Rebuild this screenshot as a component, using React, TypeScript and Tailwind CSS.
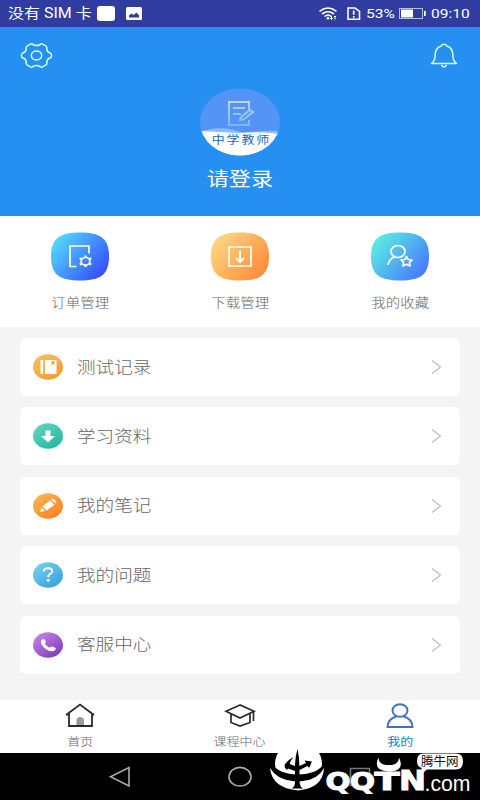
import React from "react";

const FONT = "font-['Roboto','Noto_Sans_CJK_SC',sans-serif]";

const Wide: React.FC<{ className?: string; children: React.ReactNode }> = ({ className = "", children }) => (
  <span className={`inline-block scale-x-[1.15] whitespace-nowrap ${className}`}>{children}</span>
);

const StatusBar = () => (
  <div className="h-[27px] bg-[#303c9f] flex items-center text-white text-[13.5px] leading-none">
    <Wide className="origin-left ml-[8px] w-[89px] text-[13.9px]">没有 SIM 卡</Wide>
    <svg className="w-[46px] h-[27px] shrink-0" viewBox="97 0 46 27">
      <rect x="97" y="6" width="18" height="15" rx="3" fill="#fff" />
      <rect x="126" y="7" width="16" height="13" rx="1.5" fill="#fff" />
      <path d="M129 17.5v-2l2.5-2 2 1.5 3-2.5 2.5 3v2z" fill="#303c9f" />
    </svg>
    <svg className="w-[42px] h-[27px] ml-auto shrink-0" viewBox="319 0 42 27" fill="none" stroke="#fff">
      <path d="M319.5 11.3q8.5-6.5 17 0M322 14q6-4.6 12 0M324.5 16.5q3.5-2.8 7 0" strokeWidth="1.6" />
      <circle cx="328" cy="18.2" r="1.3" fill="#fff" stroke="none" />
      <path d="M331.5 16v3.5m-1.3-1.3 1.3 1.3 1.2-1.3M335 19.5V16m-1.2 1.2L335 16l1.2 1.2" strokeWidth="1" />
      <path d="M348 8h7l4.5 3.3v8H348z" strokeWidth="1.6" />
      <path d="M353.7 10.5v4.2m0 1.3v1.7" strokeWidth="1.7" />
    </svg>
    <Wide className="origin-left ml-[5px] w-[33px]">53%</Wide>
    <svg className="w-[28px] h-[27px] shrink-0" viewBox="399 0 28 27">
      <rect x="399.5" y="8.5" width="23" height="10" fill="none" stroke="#b8bce4" />
      <rect x="401" y="9.5" width="12" height="8" fill="#fff" />
      <rect x="424" y="11" width="1.7" height="5" fill="#fff" />
    </svg>
    <Wide className="origin-left ml-[4px] w-[49px]">09:10</Wide>
  </div>
);

const Header = () => (
  <div className="h-[189px] bg-[#2590f1] grid grid-cols-3 px-[20px] pt-[14px]">
    <svg className="w-[33px] h-[30px]" viewBox="0 0 33 30" fill="none" stroke="#d5ffff" strokeWidth="1.5" strokeLinejoin="round">
      <path d="M10 3.3q1.6-1.2 3 .2 3.5 2.2 7 0 1.4-1.4 3-.2l3 1.9q1.3 1 .8 2.6.1 3.5 3.2 4.200 1.600.5 1.600 2.500t-1.600 2.500q-3.100.7-3.200 4.200.5 1.600-.8 2.600l-3 1.900q-1.600 1.200-3-.2-3.500-2.200-7 0-1.400 1.400-3 .2L7 23.800q-1.300-1-.8-2.600-.1-3.500-3.200-4.200-1.600-.5-1.600-2.500T3 12q3.100-.7 3.200-4.200-.5-1.600.8-2.600z" />
      <ellipse cx="16.5" cy="14.5" rx="5.2" ry="4.4" />
    </svg>
    <div className="flex flex-col items-center pt-[46.500px]">
      <svg className="w-[80px] h-[68px]" viewBox="0 0 80 68">
        <defs>
          <clipPath id="avatar"><ellipse cx="40" cy="34" rx="40" ry="33.500" /></clipPath>
          <linearGradient id="note" x2="0" y2="1">
            <stop stopColor="#b9d7ff" />
            <stop offset="1" stopColor="#7fb5f8" />
          </linearGradient>
        </defs>
        <g clipPath="url(#avatar)">
          <path d="M0 0h80v68H0z" fill="#5494f7" />
          <path d="M0 44q22-8 43 1 20-3 37-2v25H0z" fill="#8bbaff" />
          <path d="M0 43q20 1 37 2 25-2 43 1v22H0z" fill="#fff" />
        </g>
        <g fill="none" stroke="url(#note)" strokeWidth="2">
          <path d="M49 22V14H29v23h20v-5M33 20h12M33 26h8M40 32l1-3 9-7 3 2-9 7z" />
        </g>
        <text x="10.200" y="56" fontSize="11.300" textLength="50" transform="scale(1.150 1)" fill="#2864bb">中学教师</text>
      </svg>
      <Wide className="mt-[10px] text-[19.300px] leading-[28px] text-white">请登录</Wide>
    </div>
    <svg className="w-[33px] h-[30px] justify-self-end -mr-[1px]" viewBox="0 0 33 30" fill="none" stroke="#d5ffff" strokeWidth="1.500" strokeLinejoin="round">
      <path d="M3.500 22.500q3.700-3 3.600-8 .1-8 6.200-9.500.5-1.700 2.700-1.700T18.700 5q6.100 1.500 6.200 9.500-.1 5 3.600 8zM13.500 24q2.500 4 5 0" />
    </svg>
  </div>
);

const tiles = [
  {
    label: "订单管理",
    id: "order",
    stops: ["#53e1ff", "#3545fa"],
    icon: (
      <>
        <path d="M25.5 34.500H19V14h19v7.500" />
        <ellipse cx="34.500" cy="29.300" rx="4.300" ry="3.800" />
        <path d="M34.500 25.500v-2m0 11.600v-2M30.800 27.300l-2-1.200m11.400 6.400-2-1.200M30.800 31.300l-2 1.200m11.400-6.400-2 1.200" strokeWidth="2.200" />
      </>
    ),
  },
  {
    label: "下载管理",
    id: "download",
    stops: ["#ffdb86", "#ff8733"],
    icon: (
      <>
        <path d="M18 15h22v19H18z" />
        <path d="M29 19v10.500m-4-3.500 4 4 4-4" strokeWidth="2" />
      </>
    ),
  },
  {
    label: "我的收藏",
    id: "favorite",
    stops: ["#5cf4e1", "#4672ff"],
    icon: (
      <>
        <ellipse cx="27" cy="19.500" rx="7" ry="6" />
        <path d="M17 33q.5-5 6.500-8.500" />
        <path d="m35.500 24.500 1.600 3 4 .5-2.700 2.400.7 3.600-3.600-1.700-3.600 1.700.7-3.600L30 28l4-.5z" strokeLinejoin="round" />
      </>
    ),
  },
];

const Tiles = () => (
  <div className="h-[111px] bg-white grid grid-cols-3 pt-[16px]">
    {tiles.map((t) => (
      <div key={t.id} className="flex flex-col items-center">
        <svg className="w-[58px] h-[49px]" viewBox="0 0 58 49">
          <defs>
            <linearGradient id={t.id} x1="0" y1="0.150" x2="1" y2="0.850">
              <stop stopColor={t.stops[0]} />
              <stop offset="1" stopColor={t.stops[1]} />
            </linearGradient>
          </defs>
          <path d="M29 .5C49 .5 58 6 58 24.500S49 48.500 29 48.500 0 43 0 24.500 9 .5 29 .5z" fill={`url(#${t.id})`} />
          <g fill="none" stroke="#fff" strokeWidth="1.700">{t.icon}</g>
        </svg>
        <Wide className="mt-[12px] text-[12.600px] leading-[20px] font-light text-[#666]">{t.label}</Wide>
      </div>
    ))}
  </div>
);

const rows = [
  {
    label: "测试记录",
    id: "record",
    stops: ["#f8c063", "#f29a30"],
    icon: (
      <>
        <path d="M7.500 6h2.700v14H7.500zM12 6h11.500v14H12z" fill="#fff" />
        <path d="M18.500 7h2.800v4l-1.400-1.100-1.400 1.100z" fill="#f2a040" />
      </>
    ),
  },
  {
    label: "学习资料",
    id: "study",
    stops: ["#63d5bf", "#20b69f"],
    icon: <path d="M12.500 7.500h5v5.500H22l-7 6.500L8 13h4.500z" fill="#fff" />,
  },
  {
    label: "我的笔记",
    id: "notes",
    stops: ["#ffb852", "#fa7d22"],
    icon: (
      <path d="m7 19 1.500-4.300 3.400 3.200zM9.500 13.500l7.500-6 4.400 4.200-7.900 5.800zM18 6.700q2.200-1.300 4 .3 1.500 1.700.5 3.500z" fill="#fff" />
    ),
  },
  {
    label: "我的问题",
    id: "question",
    stops: ["#77d0f3", "#369fdb"],
    icon: (
      <>
        <path d="M10.700 9.500q.3-3.300 4.500-3.300 4 0 4 3 0 1.900-2.200 3-1.800.9-1.800 3" fill="none" stroke="#fff" strokeWidth="2" />
        <ellipse cx="15.200" cy="18.300" rx="1.600" ry="1.400" fill="#fff" />
      </>
    ),
  },
  {
    label: "客服中心",
    id: "service",
    stops: ["#c78ae9", "#7c35b9"],
    icon: (
      <path d="M8 8.500q1.500-2 3-1.500l2 2.500q.2 1-1.300 2 1.800 3 5 4.200 1.700-1.500 2.700-1.200l3.300 1.500q.7.900-1 2.500-3.700 2-8.700-1.200Q7.500 13.500 8 8.500z" fill="#fff" />
    ),
  },
];

const Menu = () => (
  <div className="h-[373px] bg-[#f4f4f4] px-[20px] pt-[11px] flex flex-col gap-[11.400px]">
    {rows.map((r) => (
      <div key={r.id} className="h-[58px] shrink-0 bg-white rounded-[6px] flex items-center pl-[13px] pr-[18px]">
        <svg className="w-[30px] h-[26px]" viewBox="0 0 30 26">
          <defs>
            <linearGradient id={r.id} x1="0.100" y1="0" x2="0.900" y2="1">
              <stop stopColor={r.stops[0]} />
              <stop offset="1" stopColor={r.stops[1]} />
            </linearGradient>
          </defs>
          <ellipse cx="15" cy="13" rx="15" ry="12.700" fill={`url(#${r.id})`} />
          {r.icon}
        </svg>
        <Wide className="origin-left ml-[14px] pt-[1px] text-[16.200px] leading-[24px] font-light text-[#666]">{r.label}</Wide>
        <svg className="w-[12px] h-[16px] ml-auto" viewBox="0 0 12 16" fill="none" stroke="#bdbdbd" strokeWidth="1.200">
          <path d="m2 1.500 8.500 6.500L2 14.500" />
        </svg>
      </div>
    ))}
  </div>
);

const TabBar = () => (
  <div className="h-[53px] bg-white grid grid-cols-3 text-[#666] font-light text-[11.300px] leading-[16px]">
    <div className="flex flex-col items-center pt-[3px]">
      <svg className="w-[32px] h-[26px]" viewBox="0 0 32 26" fill="none" stroke="#292a2c" strokeWidth="1.800">
        <path d="M12.500 24v-6.500q0-3.500 3.700-3.500t3.800 3.500V24z" fill="#999" stroke="none" />
        <path d="M2 12 16 1.500 30 12M2 11.500h3V23h23V11.500h2" />
      </svg>
      <Wide className="mt-[6px]">首页</Wide>
    </div>
    <div className="flex flex-col items-center pt-[3px]">
      <svg className="w-[32px] h-[26px]" viewBox="0 0 32 26" fill="none" stroke="#292a2c" strokeWidth="1.700">
        <path d="M16 2 2 8.300 16 15l14-6.700zM7 11v8.500l9 3.500 10-3.500V11M29.500 8.500v9.500" />
      </svg>
      <Wide className="mt-[6px]">课程中心</Wide>
    </div>
    <div className="flex flex-col items-center pt-[3px] text-[#1b80d8] font-normal">
      <svg className="w-[32px] h-[26px]" viewBox="0 0 32 26" fill="none" stroke="#3c71cd" strokeWidth="1.900">
        <ellipse cx="16" cy="7.500" rx="7.500" ry="6.300" />
        <path d="M12 13.500Q4 16 3.500 24h25Q28 16 20 13.500" />
      </svg>
      <Wide className="mt-[6px]">我的</Wide>
    </div>
  </div>
);

const SystemNav = () => (
  <div className="h-[47px] bg-black">
    <svg className="w-[480px] h-[47px]" viewBox="0 753 480 47" fill="none" stroke="#aaa" strokeWidth="1.600">
      <path d="M129 767.500v18.500l-18.500-9.300z" />
      <ellipse cx="240" cy="776.700" rx="11" ry="9.300" />
      <path d="M350.500 768.500h19v17h-19z" stroke="#777" />
    </svg>
  </div>
);

const Watermark = () => (
  <svg className="absolute left-[265px] top-[740px] w-[215px] h-[60px]" viewBox="265 740 215 60">
    <ellipse cx="298.500" cy="764" rx="23.500" ry="23" fill="#fff" />
    {/* dark bowl with a lighter rim under it */}
    <path d="M272 764q7 10 26 10.500 19-.5 26-10.500l1 8q-9 9-27 9.500-18-.5-27-9.500z" fill="#000" />
    <path d="M270 768q7 11.500 22 13l1 5h9l1-5q15-1.500 21-13-1 20-26 22.500-26-2.500-28-22.500z" fill="#fff" />
    <path d="M297.500 749q2 9 1.800 17l6.700-3-1.500-2.500 7.500 1-3 6.500-1.500-2-8 4v12q.5 5 3.500 6.500h-11.500q3.500-1.500 3.500-6.500v-11l-7-2.500-1 1.500q-4-3.500-1.500-6.500 2.500-3.500 8-6.500-3.500 4-3.800 7l5.300 2q0-9 2.500-17z" fill="#000" />
    <path d="M378.500 757.500q-6 12.500 9 14h4q13.500-1.500 7.500-14-.5 6.500-7 7.500h-6.500q-6.500-1-7-7.500z" fill="#fff" />
    <g fill="#fff" stroke="#fff" strokeWidth="1" fontWeight="700" className="font-['DejaVu_Sans',sans-serif]">
      <text x="325.500" y="790" fontSize="24" textLength="25" lengthAdjust="spacingAndGlyphs">Q</text>
      <text x="350" y="790" fontSize="24" textLength="25" lengthAdjust="spacingAndGlyphs">Q</text>
      <text x="374.500" y="790" fontSize="24" textLength="25" lengthAdjust="spacingAndGlyphs">T</text>
      <text x="399" y="790" fontSize="26" textLength="27" lengthAdjust="spacingAndGlyphs">N</text>
    </g>
    <text x="424.500" y="790.500" fontSize="22" textLength="46" lengthAdjust="spacingAndGlyphs" fill="#fff" className="font-['Liberation_Sans',sans-serif]">.com</text>
    <path d="M423 753.500h33q7 0 7 8t-7 8h-29l-5 4-.5-5.500q-4.500-1.500-4.500-6.500 0-8 6-8z" fill="#fff" />
    <text x="421" y="766" fontSize="12.500" textLength="37.500" lengthAdjust="spacingAndGlyphs" fill="#111">腾牛网</text>
  </svg>
);

const App: React.FC = () => {
  return (
    <div className={`relative w-[480px] h-[800px] overflow-hidden ${FONT}`}>
      <StatusBar />
      <Header />
      <Tiles />
      <Menu />
      <TabBar />
      <SystemNav />
      <Watermark />
    </div>
  );
};

export default App;
